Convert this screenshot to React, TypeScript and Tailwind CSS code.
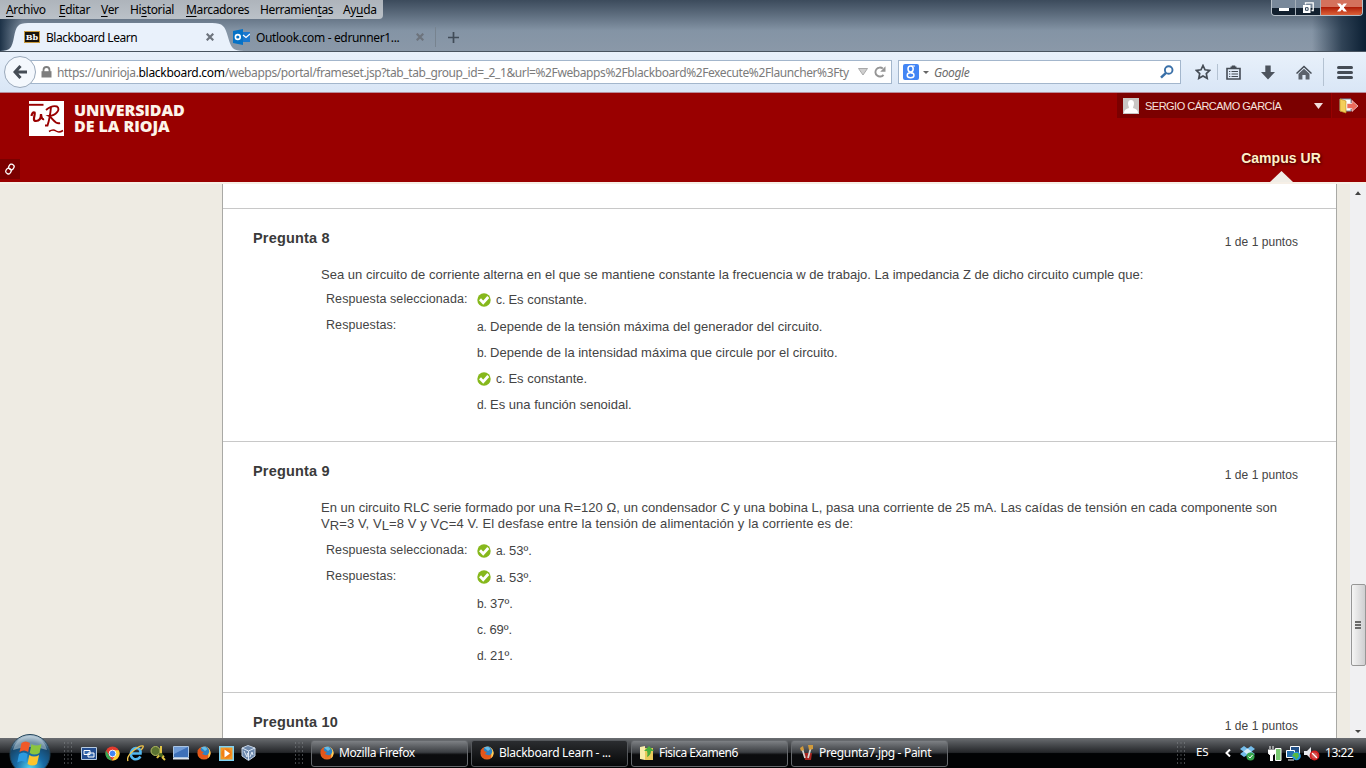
import React from "react";

const ui = "font-['Noto_Sans','Open_Sans',sans-serif]";

function Check() {
  return (
    <svg width="14" height="14" viewBox="0 0 14 14" className="shrink-0">
      <circle cx="7" cy="7" r="6.7" fill="#86b81c" />
      <path d="M3 6.200 6.200 9.600 11.300 4" fill="none" stroke="#fff" strokeWidth="2.800" />
    </svg>
  );
}

function Firefox() {
  return (
    <svg width="14" height="14" viewBox="0 0 14 14" className="shrink-0">
      <circle cx="7" cy="7" r="6.6" fill="#e4621b" />
      <path d="M7 .4A6.6 6.6 0 0 1 11 12.2C12 8 11 4 7 .4Z" fill="#fbd25c" />
      <circle cx="7.6" cy="5.2" r="4.6" fill="#2f83c4" />
      <path d="M4 1.6Q8-.5 10.5 3L8 5Z" fill="#65bde8" />
      <path d="M.6 4 3 3l2 2.4 2 .6-2 2 4 1.6 2-1q-2 4-6 3.8Q1 11 .6 4Z" fill="#e4561b" />
    </svg>
  );
}

type MenuProps = { a?: string; u: string; b: string; w: string };
function MenuItem({ a = "", u, b, w }: MenuProps) {
  return (
    <div className={`${w} shrink-0`}>
      {a}
      <span className="underline underline-offset-2">{u}</span>
      {b}
    </div>
  );
}

function CloseX() {
  return (
    <svg width="8" height="8" viewBox="0 0 8 8" className="shrink-0">
      <path d="M.7.7 7.300 7.300M7.300.7.7 7.300" stroke="#6d747d" strokeWidth="2.200" />
    </svg>
  );
}

function TitleBar() {
  return (
    <div className="relative flex h-[52px] flex-col border-b border-[#48535f] bg-linear-to-b from-[#3c4b5c] via-[#8494a5] via-60% to-[#8a98a8]">
      <div className="absolute inset-y-0 right-0 w-[54px] bg-linear-to-r from-transparent via-[#1b2f43]/80 via-55% to-[#0b1f33]" />
      <div className="absolute inset-y-0 left-0 w-[22px] bg-linear-to-r from-[#1d3247] to-transparent" />
      <div className="relative flex h-6 justify-between">
        <div className={`flex h-[19px] w-[383px] rounded-br bg-linear-to-b from-[#aeb4bb] to-[#bac1c8] pl-[6px] text-[12px] leading-[19px] tracking-[-0.35px] text-black ${ui}`}>
          <MenuItem u="A" b="rchivo" w="w-[53px]" />
          <MenuItem u="E" b="ditar" w="w-[42px]" />
          <MenuItem u="V" b="er" w="w-[29px]" />
          <MenuItem a="Hi" u="s" b="torial" w="w-[56px]" />
          <MenuItem u="M" b="arcadores" w="w-[74px]" />
          <MenuItem a="Herramien" u="t" b="as" w="w-[83px]" />
          <MenuItem a="Ay" u="u" b="da" w="w-[36px]" />
        </div>
        <div className="mr-[3px] flex h-4 overflow-hidden rounded-b border border-t-0 border-[#b5bec7]">
          <div className="flex w-[24px] items-end justify-center border-r border-[#a5afb9] bg-linear-to-b from-[#78889a] from-50% to-[#12202f] to-55% pb-[4px]">
            <div className="h-[3px] w-[10px] bg-white" />
          </div>
          <div className="flex w-[25px] items-center justify-center border-r border-[#a5afb9] bg-linear-to-b from-[#78889a] from-50% to-[#12202f] to-55%">
            <svg width="12" height="12" viewBox="0 0 12 12">
              <path d="M3.5 2.5V.8h7.7v7.7H9.5" fill="none" stroke="#fff" strokeWidth="1.3" />
              <path d="M1 3h7.5v8H1Z" fill="#fff" />
              <path d="M3.5 5.7h2.6v2.6H3.5Z" fill="#fff" stroke="#33465a" />
            </svg>
          </div>
          <div className="flex w-[41px] items-center justify-center bg-linear-to-b from-[#d4715c] from-45% via-[#b01c06] via-50% to-[#dc6038]">
            <svg width="10" height="9" viewBox="0 0 11 9">
              <path d="M0 0h3.6l1.9 2.3L7.4 0H11L7.5 4.5 11 9H7.4L5.5 6.7 3.6 9H0l3.5-4.5Z" fill="#fff" />
            </svg>
          </div>
        </div>
      </div>
      <div className={`relative flex h-7 text-[12px] text-black ${ui}`}>
        <div className="relative h-7 w-[233px] shrink-0">
          <svg width="244" height="28" viewBox="0 0 244 28" className="absolute left-0 top-0">
            <path d="M0 28C10 28 12 25 14 14C16 3 18 0 28 0H212C223 0 225 3 228 14C231 25 233 28 244 28Z" fill="#e9f1fb" />
          </svg>
          <div className="relative flex h-7 items-center pl-[24px]">
            <div className="flex h-[12px] w-[16px] items-center justify-center border border-[#c99a3c] bg-[#18130d] font-['DejaVu_Serif',serif] text-[8px] font-bold text-white">Bb</div>
            <div className="ml-[6px] mt-[2px] w-[160px] tracking-[-0.46px]">Blackboard Learn</div>
            <CloseX />
          </div>
        </div>
        <div className="flex h-7 items-center">
          <svg width="17" height="16" viewBox="0 0 17 16">
            <path d="M7 3h10v10H7Z" fill="#1b78cf" />
            <path d="M0 2 10 0v16L0 14Z" fill="#0672c6" />
            <path d="m10 6 3 2.5L17 5" stroke="#fff" fill="none" strokeWidth="1.3" />
            <circle cx="4.8" cy="8" r="2.4" stroke="#fff" strokeWidth="1.6" fill="none" />
          </svg>
          <div className="ml-[6px] mt-[2px] w-[160px] tracking-[-0.34px]">Outlook.com - edrunner1...</div>
          <CloseX />
          <div className="ml-[11px] h-5 w-px bg-[#77838f]" />
          <svg width="11" height="11" viewBox="0 0 11 11" className="ml-[12px]">
            <path d="M5.5 0V11M0 5.5H11" stroke="#414c58" strokeWidth="1.7" />
          </svg>
        </div>
      </div>
    </div>
  );
}

function Toolbar() {
  return (
    <div className={`flex h-[41px] items-center border-b border-[#b98d9c] bg-linear-to-b from-[#e9f1fb] to-[#d9e6f6] text-[12px] ${ui}`}>
      <div className="z-10 ml-[4px] flex h-[32px] w-[32px] shrink-0 items-center justify-center rounded-full border border-[#9aa9bb] bg-[#f4f8fd]">
        <svg width="14" height="14" viewBox="0 0 14 14">
          <path d="M7.5 1 2 7l5.500 6M2 7h12" fill="none" stroke="#454c55" strokeWidth="3" />
        </svg>
      </div>
      <div className="-ml-[6px] flex h-[24px] w-[862px] shrink-0 items-center border border-[#a3b6cc] bg-white pl-[10px]">
        <svg width="11" height="12" viewBox="0 0 11 12" className="shrink-0">
          <path d="M2.500 6V4a3 3 0 0 1 6 0V6" fill="none" stroke="#7e7e7e" strokeWidth="1.8" />
          <path d="M.5 5.200h10v6.300H.5Z" fill="#7e7e7e" />
        </svg>
        <div className="ml-[5px] mt-px w-[795px] shrink-0 whitespace-nowrap text-[#7b7b7b]">
          <span className="tracking-[-0.36px]">https://unirioja.</span>
          <span className="tracking-[-0.3px] text-black">blackboard.com</span>
          <span className="tracking-[-0.4px]">/webapps/portal/frameset.jsp?tab_tab_group_id=_2_1&amp;url=%2Fwebapps%2Fblackboard%2Fexecute%2Flauncher%3Fty</span>
        </div>
        <svg width="10" height="8" viewBox="0 0 10 8" className="ml-[6px] shrink-0">
          <path d="M.5.5h9L5 7Z" fill="#cfcfcf" stroke="#a9a9a9" />
        </svg>
        <svg width="12" height="12" viewBox="0 0 12 12" className="ml-[6px] shrink-0">
          <path d="M9.500 8.800A4.500 4.500 0 1 1 8.800 2.600" fill="none" stroke="#959595" strokeWidth="1.900" />
          <path d="M11.500.3v5.400H6.200Z" fill="#959595" />
        </svg>
      </div>
      <div className="ml-[6px] flex h-[24px] w-[283px] shrink-0 items-center border border-[#a3b6cc] bg-white pl-[4px]">
        <div className="flex h-4 w-4 items-center justify-center rounded-[2px] bg-[#4285f4]">
          <svg width="10" height="14" viewBox="0 0 10 14">
            <ellipse cx="4.600" cy="4" rx="2.600" ry="2.900" fill="none" stroke="#fff" strokeWidth="1.500" />
            <ellipse cx="4.600" cy="10.300" rx="3.400" ry="2.500" fill="none" stroke="#fff" strokeWidth="1.400" />
            <path d="M5 1h4M5 7l1.500 1.500" stroke="#fff" strokeWidth="1.200" />
          </svg>
        </div>
        <svg width="6" height="3" viewBox="0 0 6 3" className="ml-[4px]"><path d="M0 0h6L3 3Z" fill="#666" /></svg>
        <div className="ml-[5px] mt-[2px] w-[226px] italic tracking-[-0.4px] text-[#6c6c6c]">Google</div>
        <svg width="14" height="14" viewBox="0 0 14 14">
          <circle cx="8.700" cy="5" r="3.800" fill="none" stroke="#3a70a8" strokeWidth="1.900" />
          <path d="M6 7.800 1 12.700" stroke="#3a70a8" strokeWidth="2.500" />
        </svg>
      </div>
      <svg width="16" height="16" viewBox="0 0 16 16" className="ml-[14px] shrink-0">
        <path d="m8 1.500 2 4.300 4.700.6-3.400 3.200.9 4.700L8 12l-4.200 2.300.9-4.700L1.300 6.400 6 5.800Z" fill="none" stroke="#454c55" strokeWidth="1.700" />
      </svg>
      <div className="ml-[6px] h-4 w-px bg-[#b4c2d2]" />
      <svg width="15" height="15" viewBox="0 0 15 15" className="ml-[8px] shrink-0">
        <path d="M1 3.500h13v10.500H1Z" fill="none" stroke="#454c55" strokeWidth="1.600" />
        <path d="M4.500 3V1.500h1.300V.4h3.400v1.100h1.300V3Z" fill="#454c55" />
        <path d="M3 6.500h1.300M5.500 6.500H12M3 9h1.300M5.500 9H12M3 11.500h1.300M5.500 11.500H12" stroke="#454c55" strokeWidth="1" />
      </svg>
      <svg width="14" height="15" viewBox="0 0 14 15" className="ml-[20px] shrink-0">
        <path d="M4.300.5h5.400V7H14L7 14.500 0 7h4.300Z" fill="#4c535d" />
      </svg>
      <svg width="16" height="15" viewBox="0 0 16 15" className="ml-[21px] shrink-0">
        <path d="M0 8 8 .4 16 8l-1 1-7-6.500L1 9Z" fill="#454c55" />
        <path d="m2.500 8.800 5.500-5 5.500 5V14.500H9.600V10H6.400v4.500H2.500Z" fill="#5b626c" />
      </svg>
      <div className="ml-[11px] h-7 w-px bg-[#b4c2d2]" />
      <div className="ml-[13px] flex w-[16px] flex-col gap-[2px]">
        <div className="h-[3px] rounded bg-[#454c55]" />
        <div className="h-[3px] rounded bg-[#454c55]" />
        <div className="h-[3px] rounded bg-[#454c55]" />
      </div>
    </div>
  );
}

function SiteHeader() {
  return (
    <header className="flex h-[89px] shrink-0 justify-between bg-[#990000]">
      <div className="flex flex-col justify-between">
        <div className="flex pl-[29px] pt-[8px]">
          <svg width="35" height="35" viewBox="0 0 35 35">
            <path d="M0 0h35v35H0Z" fill="#fff" />
            <path d="M0 3.800h14.500" stroke="#900" strokeWidth="1.900" />
            <path d="M2.500 15q.5-4 3-3.500c1.500 1-3 8.500 1.500 8.500 3.500 0 5-3 5-7q.5 6 3 5" fill="none" stroke="#900" strokeWidth="2.200" />
            <path d="M22 6q-1 11-3.500 18.500h-2.500M17 9q6-5 11-3.500c4 3-1 9-8 9.500 4 2 6 9 11 7" fill="none" stroke="#900" strokeWidth="1.900" />
            <path d="M20 30.500q4-2.500 7-.5t7-.5" fill="none" stroke="#900" strokeWidth="1.500" />
          </svg>
          <div className="ml-[10px] mt-[2px] whitespace-nowrap font-['Open_Sans','Noto_Sans',sans-serif] text-[16px] font-extrabold leading-[15.500px] text-[#fdf3ea]">
            <div className="tracking-[-0.1px]">UNIVERSIDAD</div>
            <div className="tracking-[-0.05px]">DE LA RIOJA</div>
          </div>
        </div>
        <div className="mb-[3px] flex h-[20px] w-[20px] items-center justify-center bg-[#7b0000]">
          <svg width="12" height="12" viewBox="0 0 12 12">
            <rect x="4.800" y="1" width="5" height="5.500" rx="2.200" transform="rotate(30 7 4)" fill="none" stroke="#fff" strokeWidth="1.300" />
            <rect x="2" y="5.300" width="5" height="5.500" rx="2.200" transform="rotate(30 4.500 8)" fill="none" stroke="#fff" strokeWidth="1.300" />
          </svg>
        </div>
      </div>
      <div className="flex w-[249px] flex-col justify-between">
        <div className="flex">
          <div className="flex h-[25px] w-[214px] items-center bg-[#7b0000] pl-[6px] font-['Liberation_Sans',sans-serif] text-[11px] text-[#f7e3df]">
            <svg width="16" height="16" viewBox="0 0 16 16">
              <path d="M0 0h16v16H0Z" fill="#c9c6c4" />
              <path d="M5 5.500a3 3.500 0 0 1 6 0c0 2-1 3-1 4.500 3 1 5 2 5 5H1c0-3 2-4 5-5 0-1.500-1-2.500-1-4.500Z" fill="#fff" />
            </svg>
            <div className="ml-[6px] mt-[2px] w-[169px] whitespace-nowrap tracking-[-0.52px]">SERGIO CÁRCAMO GARCÍA</div>
            <svg width="9" height="6" viewBox="0 0 9 6"><path d="M0 0h9L4.500 6Z" fill="#f2dedd" /></svg>
          </div>
          <div className="ml-px flex h-[25px] w-[34px] items-center bg-[#860000] pl-[7px]">
            <svg width="19" height="16" viewBox="0 0 19 16">
              <path d="M1 1h11v12H1Z" fill="#fff" stroke="#7392a6" />
              <path d="m1 1 6 2v12l-6-2Z" fill="#f4cf5b" stroke="#c39426" strokeWidth=".7" />
              <path d="M8 5.500h5V2.500l6 5.500-6 5.500v-3H8Z" fill="#ed6b5c" stroke="#fff" strokeWidth=".6" />
            </svg>
          </div>
        </div>
        <div className="mr-[38px] flex w-[94px] flex-col items-center self-end">
          <div className="mb-[4px] whitespace-nowrap font-['Liberation_Sans',sans-serif] text-[14px] font-bold leading-[18px] tracking-[0.04px] text-[#fff0c8] [text-shadow:1px_1px_3px_#300]">Campus UR</div>
          <svg width="24" height="11" viewBox="0 0 24 11"><path d="M12.500 0 24 11H1Z" fill="#f0ede6" /></svg>
        </div>
      </div>
    </header>
  );
}

type Answer = { letter: string; text: string; ok?: boolean };
type QuestionProps = { title: string; height: string; body?: React.ReactNode; gap?: string; selected?: Answer; answers?: Answer[] };

function Row({ label, letter, text, ok }: Answer & { label?: string }) {
  return (
    <div className="flex h-[26.250px] items-center">
      <div className="w-[151px] shrink-0 pb-[2px] text-[12.500px] tracking-[0.08px]">{label}</div>
      <div className="flex items-center gap-[5px] whitespace-nowrap text-[13px]">
        {ok && <Check />}
        <span>
          <span className="text-[12px] tracking-[-0.1px]">{letter}. </span>
          {text}
        </span>
      </div>
    </div>
  );
}

function Question({ title, height, body, gap = "pt-[4px]", selected, answers = [] }: QuestionProps) {
  return (
    <section className={`${height} shrink-0 border-b border-[#c8c8c8] pl-[30px] pr-[38px] pt-[20px]`}>
      <div className="flex h-[38px] justify-between">
        <h3 className="text-[14.500px] font-bold leading-[18px] tracking-[0.18px] text-[#3a3a3a]">{title}</h3>
        <div className="mt-1 text-[12px] leading-[18px] tracking-[0.04px]">1 de 1 puntos</div>
      </div>
      <div className="whitespace-nowrap pl-[68px] text-[13px] leading-4">{body}</div>
      {selected && (
        <div className={`${gap} pl-[73px]`}>
          <Row label="Respuesta seleccionada:" {...selected} />
          {answers.map((a, i) => (
            <Row key={a.letter} label={i === 0 ? "Respuestas:" : ""} {...a} />
          ))}
        </div>
      )}
    </section>
  );
}

function Sub({ children }: { children: React.ReactNode }) {
  return <span className="relative top-[2px]">{children}</span>;
}

function Content() {
  return (
    <div className="flex h-[556px] shrink-0 border-t-2 border-[#f6efe6] bg-[#eeebe3]">
      <main className="ml-[222px] flex w-[1115px] flex-col overflow-hidden border-x border-[#a9a9a5] bg-white font-['Liberation_Sans',Arial,sans-serif] text-[#444]">
        <div className="h-[25px] shrink-0 border-b border-[#c8c8c8]" />
        <Question
          title="Pregunta 8"
          height="h-[233px]"
          body={<div className="tracking-[0.015px]">Sea un circuito de corriente alterna en el que se mantiene constante la frecuencia w de trabajo. La impedancia Z de dicho circuito cumple que:</div>}
          selected={{ letter: "c", text: "Es constante.", ok: true }}
          answers={[
            { letter: "a", text: "Depende de la tensión máxima del generador del circuito." },
            { letter: "b", text: "Depende de la intensidad máxima que circule por el circuito." },
            { letter: "c", text: "Es constante.", ok: true },
            { letter: "d", text: "Es una función senoidal." },
          ]}
        />
        <Question
          title="Pregunta 9"
          height="h-[251px]"
          gap="pt-[6px]"
          body={
            <>
              <div className="tracking-[0.008px]">En un circuito RLC serie formado por una R=120 Ω, un condensador C y una bobina L, pasa una corriente de 25 mA. Las caídas de tensión en cada componente son</div>
              <div className="tracking-[0.090px]">V<Sub>R</Sub>=3 V, V<Sub>L</Sub>=8 V y V<Sub>C</Sub>=4 V. El desfase entre la tensión de alimentación y la corriente es de:</div>
            </>
          }
          selected={{ letter: "a", text: "53º.", ok: true }}
          answers={[
            { letter: "a", text: "53º.", ok: true },
            { letter: "b", text: "37º." },
            { letter: "c", text: "69º." },
            { letter: "d", text: "21º." },
          ]}
        />
        <Question title="Pregunta 10" height="h-[80px]" />
      </main>
      <div className="w-[13px] bg-[#eeebe3]" />
      <div className="flex w-[16px] flex-col items-center bg-[#f0f0f2]">
        <svg width="6" height="4" viewBox="0 0 8 5" className="mt-[7px] shrink-0"><path d="M4 0 8 5H0Z" fill="#444" /></svg>
        <div className="mt-[389px] flex h-[82px] w-[15px] shrink-0 flex-col items-center justify-center gap-px rounded-[2px] border border-[#979797] bg-linear-to-r from-[#f5f5f5] to-[#cfcfd1]">
          <div className="h-[2px] w-[6px] bg-[#6b6b6b]" />
          <div className="h-[2px] w-[6px] bg-[#6b6b6b]" />
          <div className="h-[2px] w-[6px] bg-[#6b6b6b]" />
        </div>
        <svg width="6" height="3" viewBox="0 0 8 4" className="mt-[64px] shrink-0"><path d="M0 0h8L4 4Z" fill="#444" /></svg>
      </div>
    </div>
  );
}

function Grip() {
  return (
    <svg width="8" height="22" viewBox="0 0 8 22" className="shrink-0">
      {[1, 5, 9, 13, 17, 21].map((y) => (
        <path key={y} d={`M0 ${y}h1M3.500 ${y}h1M7 ${y}h1`} stroke="#85898d" />
      ))}
    </svg>
  );
}

function TaskButton({ label, icon, active, w, track }: { label: string; icon: React.ReactNode; active?: boolean; w: string; track: string }) {
  return (
    <div
      className={`flex h-[27px] ${w} shrink-0 items-center gap-[5px] whitespace-nowrap rounded-[3px] border pl-[8px] text-[12px] text-white ${track} ${
        active
          ? "border-[#55585c] bg-linear-to-b from-[#2b2d30] to-[#070809]"
          : "border-[#66696d] bg-linear-to-b from-[#7e8185] via-[#3c3f43] via-45% to-[#0b0c0e] to-55%"
      }`}
    >
      {icon}
      <span>{label}</span>
    </div>
  );
}

function Taskbar() {
  return (
    <footer className={`flex h-[30px] shrink-0 items-center bg-linear-to-b from-[#6a6d71] via-[#25272a] via-48% to-[#020304] to-52% ${ui}`}>
      <svg width="44" height="34" viewBox="0 0 44 34" className="relative -top-[2px] ml-[8px] shrink-0">
        <defs>
          <radialGradient id="orb" cx=".5" cy=".85" r=".8">
            <stop offset="0" stopColor="#52d5f4" />
            <stop offset=".45" stopColor="#1769a3" />
            <stop offset=".8" stopColor="#174568" />
            <stop offset="1" stopColor="#a6bccd" />
          </radialGradient>
        </defs>
        <circle cx="22" cy="20.500" r="20" fill="url(#orb)" stroke="#23455a" />
        <path d="M5 16Q9 2 22 2t17 14Q22 10 5 16Z" fill="#c9d9e2" opacity=".5" />
        <path d="M13.500 9q4-3 8.500 0l-1.800 9q-4-3-8.700 0Z" fill="#f0592a" />
        <path d="M23.500 10q4.500 3 10 0L31.500 19q-5 3-9.800 0Z" fill="#8ac53e" />
        <path d="M11 20q4.500-3 8.700 0L18 28.500q-4-3-8.700 0Z" fill="#2c9ae0" />
        <path d="M21.300 21q4.500 3 9.800 0L29 30q-4.500 3-9.500 0Z" fill="#fdc42c" />
      </svg>
      <div className="ml-[12px] flex"><Grip /></div>
      <svg width="16" height="13" viewBox="0 0 16 13" className="ml-[9px] shrink-0">
        <path d="M.5.5h15v12H.5Z" fill="#244e91" stroke="#b6cadf" />
        <path d="M3 3.500h6v4H3ZM7 6h6v4H7Z" fill="#3569ae" stroke="#fff" />
      </svg>
      <svg width="15" height="15" viewBox="0 0 16 16" className="ml-[8px] shrink-0">
        <circle cx="8" cy="8" r="7.500" fill="#e33b2e" />
        <path d="M1.200 4.700 6 13 7.500 15.500A7.500 7.500 0 0 1 1.200 4.700Z" fill="#36a852" />
        <path d="M7.500 15.500 11 9.500 8.500 4.500H14.600A7.500 7.500 0 0 1 7.500 15.500Z" fill="#fbd034" />
        <circle cx="8" cy="8" r="3.600" fill="#4285f4" stroke="#fff" />
      </svg>
      <svg width="17" height="17" viewBox="0 0 17 17" className="ml-[7px] shrink-0">
        <path d="M13.500 11.500Q11 15 7 14q-4-2-3-6.500 1-4 5-4.500 5 0 4.500 5.500H5" fill="none" stroke="#53b7ee" strokeWidth="2.600" />
        <path d="M1 16Q-1 12 6 6t10-5q1 1-2 4" fill="none" stroke="#f0c44b" strokeWidth="1.400" />
      </svg>
      <svg width="16" height="16" viewBox="0 0 16 16" className="ml-[6px] shrink-0">
        <circle cx="5.500" cy="6" r="4.500" fill="#5c7331" stroke="#b4bc61" />
        <path d="M11 1v9M7 13q3-5 7-1" fill="none" stroke="#e0c445" strokeWidth="2" />
        <circle cx="11" cy="10" r="2" fill="#486521" />
        <path d="m12 12 3 3" stroke="#e0c445" strokeWidth="2" />
      </svg>
      <svg width="16" height="14" viewBox="0 0 16 14" className="ml-[7px] shrink-0">
        <path d="M.5.500h15v11H.5Z" fill="#3d70b8" stroke="#aac5e2" />
        <path d="M1 1h14L1 8Z" fill="#6f9bd6" />
        <path d="M0 12h16v1.500H0Z" fill="#dbe3ec" />
      </svg>
      <div className="ml-[8px]"><Firefox /></div>
      <svg width="15" height="15" viewBox="0 0 15 15" className="ml-[8px] shrink-0">
        <path d="M.5.500h14v14H.5Z" fill="#f29824" stroke="#7ed2f3" strokeWidth="2" />
        <circle cx="7.500" cy="7.500" r="5" fill="#f17e17" />
        <path d="m5.500 3.500 5.500 4-5.500 4Z" fill="#fff" />
      </svg>
      <svg width="15" height="16" viewBox="0 0 15 16" className="ml-[7px] shrink-0">
        <path d="m1 3 6-2.500L14 3v8l-6.500 4.500L1 11Z" fill="#6c88ac" stroke="#c5d3e5" />
        <path d="m1 3 6.500 3L14 3M7.500 6v9" fill="none" stroke="#dce7f4" />
        <path d="m3 6 3 6 .5-4M9 12l2-5 1 3" fill="none" stroke="#dce7f4" />
      </svg>
      <div className="ml-[39px] flex"><Grip /></div>
      <div className="ml-[8px] flex gap-[3px]">
        <TaskButton w="w-[157px]" track="tracking-[-0.35px]" label="Mozilla Firefox" icon={<Firefox />} />
        <TaskButton w="w-[157px]" track="tracking-[-0.3px]" label="Blackboard Learn - ..." icon={<Firefox />} active />
        <TaskButton w="w-[157px]" track="tracking-[-0.5px]" label="Fisica Examen6" icon={
          <svg width="14" height="16" viewBox="0 0 14 16">
            <path d="M0 2 5 1v14l-5-1Z" fill="#f9edaa" />
            <path d="M5 3h8v12H5Z" fill="#e9c95a" />
            <path d="m4 6 5-5 5 5h-3q0 4-4 6 1-3 0-6Z" fill="#47ad3d" />
          </svg>
        } />
        <TaskButton w="w-[157px]" track="tracking-[-0.32px]" label="Pregunta7.jpg - Paint" icon={
          <svg width="14" height="16" viewBox="0 0 14 16">
            <path d="M4 8h8l-1 7H5Z" fill="#a62520" />
            <path d="m2 3 3 10M11 2 8 13" stroke="#d8d8d5" strokeWidth="1.700" />
            <path d="m0 3 3-2 1 4-3 1ZM8 0h5v4L9 5Z" fill="#d29b3b" />
          </svg>
        } />
      </div>
      <div className="ml-[229px] flex"><Grip /></div>
      <div className="ml-[11px] w-[29px] pb-[3px] text-[11.500px] tracking-[-0.2px] text-white">ES</div>
      <svg width="6" height="8" viewBox="0 0 6 8"><path d="M5 .5 1.500 4 5 7.500" fill="none" stroke="#fff" strokeWidth="2" /></svg>
      <svg width="15" height="15" viewBox="0 0 15 15" className="ml-[9px] shrink-0">
        <path d="m4 0 3.500 2.500L11 0l4 3-3.500 2.500L15 8l-4 3-3.500-2L4 11 0 8l3.500-2.500L0 3Z" fill="#75bdeb" />
        <path d="m7.500 2.500 4 3-4 3-4-3Z" fill="#d5edfa" />
        <circle cx="10.500" cy="10.500" r="4" fill="#36a64c" />
        <path d="m8.500 10.500 1.500 1.500 2.500-3" fill="none" stroke="#fff" />
      </svg>
      <svg width="14" height="15" viewBox="0 0 14 15" className="ml-[13px] shrink-0">
        <path d="M7.500 2.500h5.500v12H7.500Z" fill="#79ca71" stroke="#fff" />
        <path d="M2 0v3M5 0v3M0 4h7v3q-1 2-2.500 2v6h-2V9Q0 8 0 6Z" fill="#fff" stroke="#fff" />
      </svg>
      <svg width="15" height="15" viewBox="0 0 15 15" className="ml-[4px] shrink-0">
        <path d="M4.500.5h9v8h-9Z" fill="#245187" stroke="#fff" />
        <path d="M.5 4.500h8v7h-8ZM2 14h6" fill="#2770ad" stroke="#fff" />
        <circle cx="10.500" cy="10" r="4.300" fill="#2696de" />
        <path d="m8 7 4 0 1 3-3 4-1-3-3-1Z" fill="#55b840" />
      </svg>
      <svg width="16" height="15" viewBox="0 0 16 15" className="ml-[3px] shrink-0">
        <path d="M0 5h3l4-4v12L3 9H0Z" fill="#e6e8ec" />
        <circle cx="10.500" cy="9.500" r="4" fill="#d25553" stroke="#d31f20" strokeWidth="1.800" />
        <path d="m8 7 5 5" stroke="#fff" strokeWidth="1.200" />
      </svg>
      <div className="ml-[5px] whitespace-nowrap text-[12px] tracking-[-0.45px] text-white">13:22</div>
    </footer>
  );
}

export default function App() {
  return (
    <div className="flex h-[768px] w-[1366px] flex-col overflow-hidden bg-white">
      <TitleBar />
      <Toolbar />
      <SiteHeader />
      <Content />
      <Taskbar />
    </div>
  );
}
